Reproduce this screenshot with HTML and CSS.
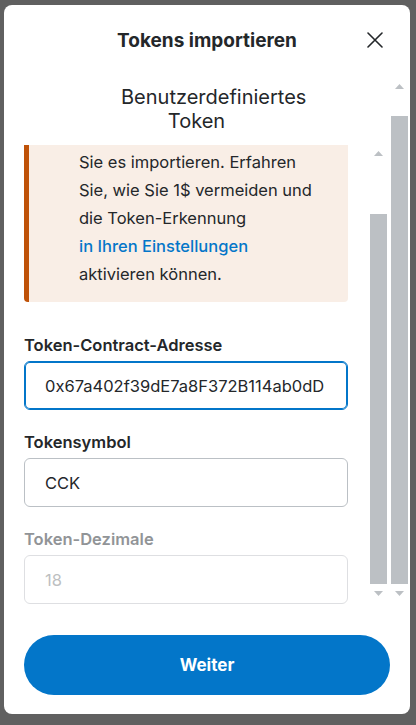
FILE: index.html
```html
<!DOCTYPE html>
<html lang="de">
<head>
<meta charset="utf-8">
<title>Tokens importieren</title>
<link rel="stylesheet" href="styles.css">
</head>
<body>
<div class="modal">
  <header class="modal-header">
    <span class="header-spacer"></span>
    <h2 class="modal-title">Tokens importieren</h2>
    <button class="close-btn" aria-label="Schließen">
      <svg width="16" height="16" viewBox="0 0 16 16"><path d="M1 1 L15 15 M15 1 L1 15" stroke="#24272a" stroke-width="1.6" stroke-linecap="round" fill="none"/></svg>
    </button>
  </header>

  <div class="outer-scroll">
    <div class="outer-content">
      <div class="tabs">
        <div class="tab">Benutzerdefiniertes Token</div>
      </div>
      <div class="inner-scroll">
        <div class="inner-content">
          <div class="warning">
            <p class="warning-text">Sie es importieren. Erfahren<br>Sie, wie Sie 1$ vermeiden und<br>die Token-Erkennung<br><a class="warning-link" href="#">in Ihren Einstellungen</a><br>aktivieren können.</p>
          </div>

          <div class="field">
            <label class="field-label" for="addr">Token-Contract-Adresse</label>
            <input id="addr" class="field-input focused" type="text" value="0x67a402f39dE7a8F372B114ab0dD" readonly>
          </div>
          <div class="field">
            <label class="field-label" for="sym">Tokensymbol</label>
            <input id="sym" class="field-input" type="text" value="CCK" readonly>
          </div>
          <div class="field disabled">
            <label class="field-label" for="dec">Token-Dezimale</label>
            <input id="dec" class="field-input" type="text" value="18" disabled>
          </div>
        </div>
        <div class="scrollbar">
          <div class="sb-btn"><svg width="9" height="5" viewBox="0 0 9 5"><polygon points="0,5 4.5,0 9,5" fill="#bcc0c4"/></svg></div>
          <div class="sb-track"><div class="sb-thumb inner-thumb"></div></div>
          <div class="sb-btn"><svg width="9" height="5" viewBox="0 0 9 5"><polygon points="0,0 9,0 4.5,5" fill="#bcc0c4"/></svg></div>
        </div>
      </div>
    </div>
    <div class="scrollbar">
      <div class="sb-btn"><svg width="9" height="5" viewBox="0 0 9 5"><polygon points="0,5 4.5,0 9,5" fill="#bcc0c4"/></svg></div>
      <div class="sb-track"><div class="sb-thumb outer-thumb"></div></div>
      <div class="sb-btn"><svg width="9" height="5" viewBox="0 0 9 5"><polygon points="0,0 9,0 4.5,5" fill="#bcc0c4"/></svg></div>
    </div>
  </div>

  <footer class="modal-footer">
    <button class="primary-btn">Weiter</button>
  </footer>
</div>
</body>
</html>
```

FILE: styles.css
```css
* { box-sizing: border-box; }

html, body {
  margin: 0;
}

body {
  width: 416px;
  height: 725px;
  overflow: hidden;
  background: #606060;
  padding: 5px 0 0 4px;
  font-family: Inter, "Noto Sans", sans-serif;
  color: #24272a;
}

.modal {
  width: 406px;
  height: 709px;
  background: #ffffff;
  border-radius: 8px;
  display: flex;
  flex-direction: column;
  overflow: hidden;
}

.modal-header {
  height: 73px;
  flex: none;
  display: grid;
  grid-template-columns: 1fr auto 1fr;
  align-items: start;
  padding: 24px 27px 0;
}

.modal-title {
  margin: 0;
  font-size: 19px;
  font-weight: 700;
  line-height: 24px;
  text-align: center;
  white-space: nowrap;
}

.close-btn {
  justify-self: end;
  width: 16px;
  height: 16px;
  margin-top: 3px;
  padding: 0;
  border: 0;
  background: none;
  display: flex;
}

.outer-scroll {
  height: 527px;
  flex: none;
  display: flex;
  padding: 0 2px 0 20px;
}

.outer-content {
  flex: 1;
  display: flex;
  flex-direction: column;
  margin-right: 4px;
  min-width: 0;
}

.tabs {
  padding: 7px 0 0 97px;
  margin-bottom: 12px;
}

.tab {
  width: 151px;
  text-align: center;
  font-size: 20px;
  line-height: 24px;
  white-space: normal;
}

.inner-scroll {
  flex: 1;
  display: flex;
  min-height: 0;
}

.inner-content {
  flex: 1;
  padding-right: 22px;
  overflow: hidden;
}

.warning {
  background: #f9eee6;
  border-left: 5px solid #bf5208;
  border-radius: 0 0 4px 4px;
  padding: 3px 12px 14px 50px;
}

.warning-text {
  margin: 0;
  font-size: 16.5px;
  line-height: 28px;
}

.warning-link {
  color: #0376c9;
  font-weight: 500;
  text-decoration: none;
}

.field {
  display: flex;
  flex-direction: column;
  gap: 4px;
  margin-top: 20px;
}

.warning + .field {
  margin-top: 31px;
}

.field-label {
  font-size: 16.5px;
  font-weight: 600;
  line-height: 24px;
}

.field-input {
  height: 49px;
  width: 100%;
  border: 1px solid #bbc0c5;
  border-radius: 6px;
  padding: 0 20px;
  font-family: inherit;
  font-size: 16.5px;
  color: #24272a;
  background: #ffffff;
  outline: none;
}

.field-input.focused {
  border-color: #0376c9;
  box-shadow: inset 0 0 0 1px #0376c9;
}

.field.disabled .field-label {
  color: #919497;
}

.field.disabled .field-input {
  border-color: #dedfe2;
  color: #bdbfc2;
  -webkit-text-fill-color: #bdbfc2;
}

.scrollbar {
  width: 17px;
  flex: none;
  display: flex;
  flex-direction: column;
  padding-bottom: 3px;
}

.sb-btn {
  height: 17px;
  flex: none;
  display: flex;
  align-items: center;
  justify-content: center;
}

.sb-btn svg { display: block; }

.sb-track {
  flex: 1;
  display: flex;
  flex-direction: column;
  justify-content: flex-end;
  padding-bottom: 1px;
}

.sb-thumb {
  background: #bcc0c4;
}

.inner-thumb { height: 370px; }
.outer-thumb { height: 468px; }

.modal-footer {
  flex: 1;
  padding: 30px 20px 0 20px;
}

.primary-btn {
  width: 100%;
  height: 60px;
  border: 0;
  border-radius: 30px;
  background: #0376c9;
  color: #ffffff;
  font-family: inherit;
  font-size: 17px;
  font-weight: 700;
}
```
